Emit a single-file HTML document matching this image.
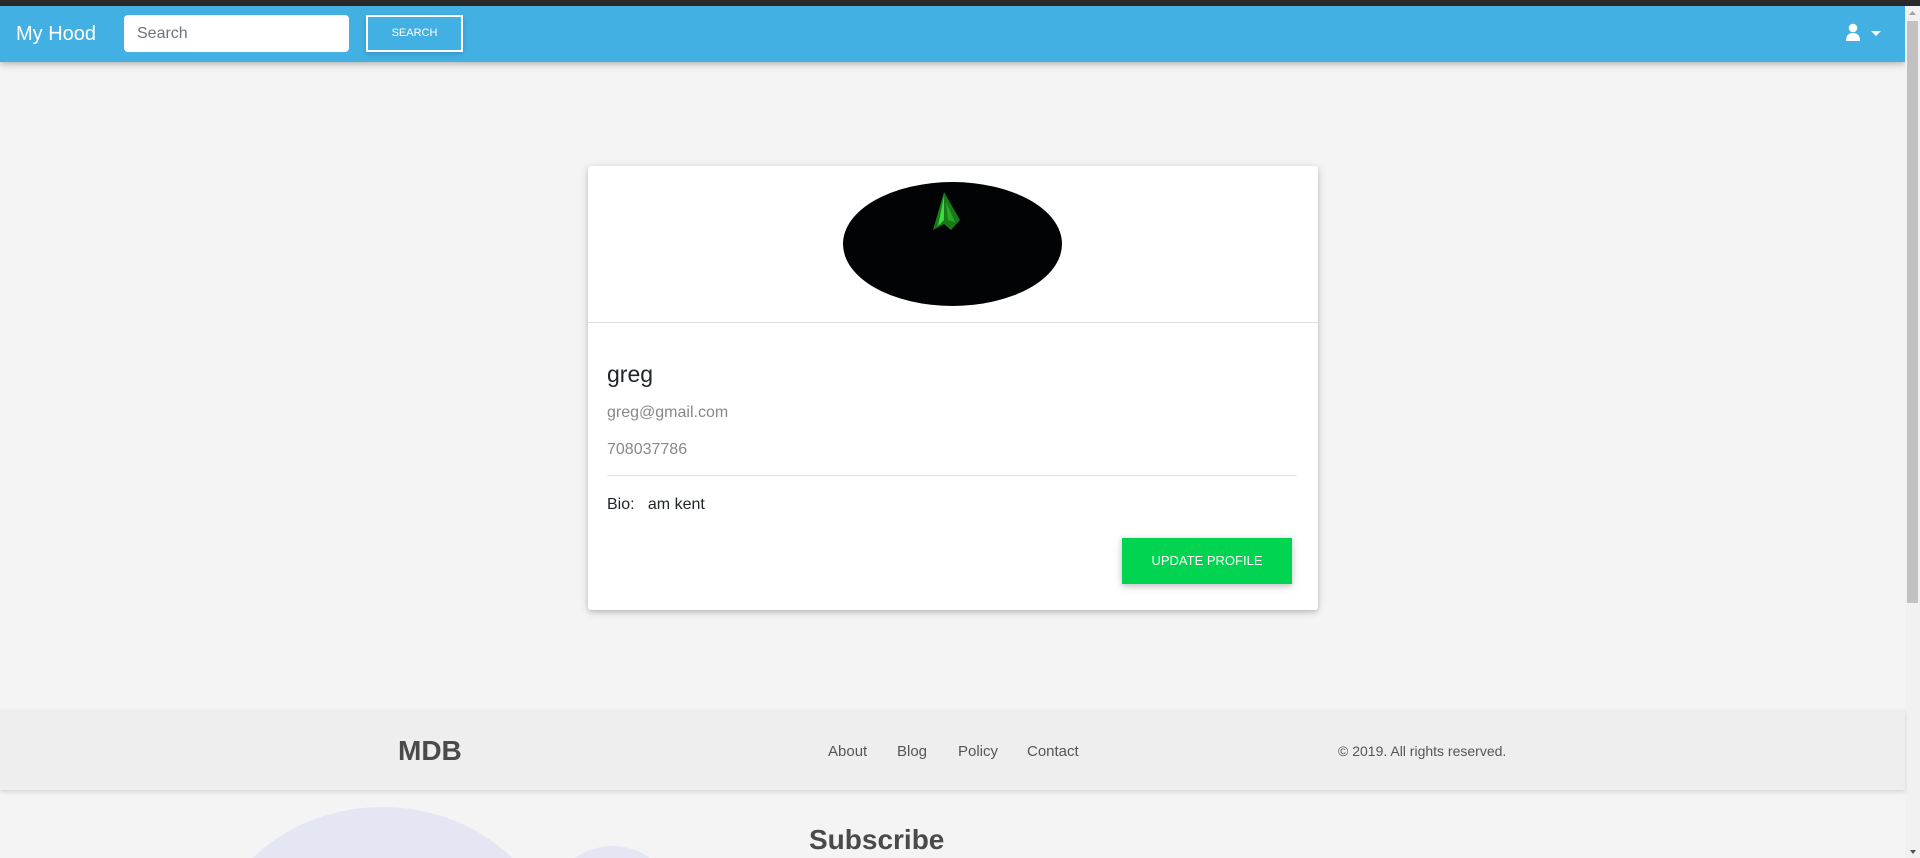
<!DOCTYPE html>
<html><head><meta charset="utf-8"><style>
*{margin:0;padding:0;box-sizing:border-box}
html,body{width:1920px;height:858px;overflow:hidden}
body{background:#f4f4f4;font-family:"Liberation Sans",Arial,sans-serif}
#w{position:relative;width:1920px;height:858px;overflow:hidden}
.top{position:absolute;left:0;top:0;width:1920px;height:6px;background:#2b2b2b}
.nav{position:absolute;left:0;top:6px;width:1905px;height:56px;background:#43b0e3;box-shadow:0 2px 5px rgba(0,0,0,.16),0 2px 10px rgba(0,0,0,.12)}
.brand{position:absolute;left:16px;top:16px;color:#fff;font-size:20px;line-height:24px}
.inp{position:absolute;left:124px;top:9px;width:225px;height:37px;background:#fff;border-radius:4px;color:#6c757d;font-size:16px;line-height:37px;padding-left:13px}
.btn{position:absolute;left:366px;top:9px;width:97px;height:37px;border:2px solid #fff;color:#fff;font-size:11px;line-height:33px;text-align:center;box-shadow:0 2px 5px rgba(0,0,0,.16)}
.sb{position:absolute;left:1905px;top:6px;width:15px;height:852px;background:#f1f1f1}
.thumb{position:absolute;left:1907px;top:21px;width:11px;height:582px;background:#c1c1c1}
.card{position:absolute;left:588px;top:166px;width:730px;height:444px;background:#fff;border-radius:3px;box-shadow:0 2px 5px rgba(0,0,0,.16),0 2px 10px rgba(0,0,0,.12)}
.ell{position:absolute;left:255px;top:16px;width:219px;height:124px;border-radius:50%;background:#020304;overflow:hidden}
.div1{position:absolute;left:0;top:156px;width:730px;height:1px;background:#e0e0e0}
.name{position:absolute;left:19px;top:195px;font-size:23px;color:#212529}
.mail{position:absolute;left:19px;top:238px;font-size:16px;color:#888}
.ph{position:absolute;left:19px;top:275px;font-size:16px;color:#888}
.hr{position:absolute;left:19px;top:309px;width:690px;height:1px;background:#e3e3e3}
.bio{position:absolute;left:19px;top:330px;font-size:16px;color:#212529}
.up{position:absolute;left:534px;top:372px;width:170px;height:46px;background:#00d451;color:#fff;font-size:13px;line-height:46px;text-align:center;box-shadow:0 2px 5px rgba(0,0,0,.16),0 2px 10px rgba(0,0,0,.12)}
.foot{position:absolute;left:0;top:710px;width:1905px;height:80px;background:#eee;box-shadow:0 2px 4px rgba(0,0,0,.12)}
.mdb{position:absolute;left:398px;top:25px;font-size:28px;font-weight:bold;color:#4a4a4a}
.lk{position:absolute;top:33px;font-size:15px;color:#555}
.c1{position:absolute;left:210px;top:807px;width:345px;height:300px;border-radius:50%;background:#e5e6f4}
.c2{position:absolute;left:555px;top:846px;width:115px;height:100px;border-radius:50%;background:#e5e6f4}
.subs{position:absolute;left:809px;top:824px;font-size:28px;font-weight:bold;color:#4a4a4a}
</style></head><body><div id="w">
<div class="top"></div>
<div class="nav">
<div class="brand">My Hood</div>
<div class="inp">Search</div>
<div class="btn">SEARCH</div>
<svg style="position:absolute;left:1846px;top:17px" width="36" height="20" viewBox="0 0 36 20"><circle cx="7" cy="5" r="4.3" fill="#fff"/><path d="M0 18 Q0 10 7 10 Q14 10 14 18Z" fill="#fff"/><path d="M25 8 L35 8 L30 13Z" fill="#fff"/></svg>
</div>
<div class="sb"></div><div class="thumb"></div>
<svg style="position:absolute;left:1907px;top:9px" width="11" height="8"><path d="M2 6 L5.5 2 L9 6Z" fill="#a3a3a3"/></svg>
<div class="card">
<div class="ell"><svg width="219" height="124" viewBox="0 0 219 124"><path d="M101 10 L90 48 L101 42 L108 48 L117 38 Z" fill="#1a7a1a"/><path d="M101 14 L95 44 L101 38 Z" fill="#3ddc3d"/><path d="M103 20 L112 40 L105 38Z" fill="#2aa82a"/></svg></div>
<div class="div1"></div>
<div class="name">greg</div>
<div class="mail">greg@gmail.com</div>
<div class="ph">708037786</div>
<div class="hr"></div>
<div class="bio">Bio:&nbsp;&nbsp; am kent</div>
<div class="up">UPDATE PROFILE</div>
</div>
<div class="foot">
<div class="mdb">MDB</div>
<div class="lk" style="left:828px">About</div>
<div class="lk" style="left:897px">Blog</div>
<div class="lk" style="left:958px">Policy</div>
<div class="lk" style="left:1027px">Contact</div>
<div class="lk" style="left:1338px;font-size:14px">© 2019. All rights reserved.</div>
</div>
<div class="c1"></div><div class="c2"></div>
<div class="subs">Subscribe</div>
<svg style="position:absolute;left:1908px;top:848px" width="10" height="8"><path d="M2 2 L8 2 L5 6Z" fill="#505050"/></svg>
</div></body></html>
